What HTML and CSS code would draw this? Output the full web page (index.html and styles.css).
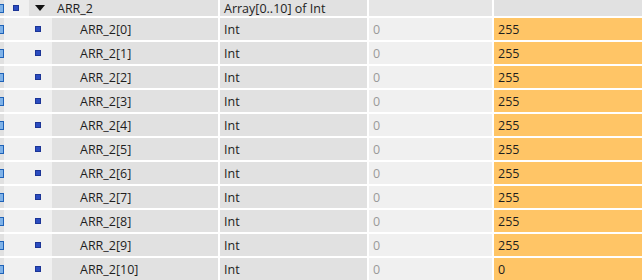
FILE: index.html
```
<!DOCTYPE html>
<html lang="en">
<head>
    <meta charset="UTF-8">
    <title>ARR_2</title>
    <link rel="stylesheet" href="styles.css">
</head>
<body>
<div class="table">
    <div class="row head">
        <div class="name">
            <span class="check"></span>
            <span class="lead"><span class="dot"></span></span>
            <span class="arrow"></span>
            <span class="label">ARR_2</span>
        </div>
        <div class="type">Array[0..10] of Int</div>
        <div class="start"></div>
        <div class="value"></div>
    </div>
    <div class="row">
        <div class="name"><span class="check"></span><span class="lead"><span class="dot"></span></span><span class="label">ARR_2[0]</span></div>
        <div class="type">Int</div><div class="start">0</div><div class="value">255</div>
    </div>
    <div class="row">
        <div class="name"><span class="check"></span><span class="lead"><span class="dot"></span></span><span class="label">ARR_2[1]</span></div>
        <div class="type">Int</div><div class="start">0</div><div class="value">255</div>
    </div>
    <div class="row">
        <div class="name"><span class="check"></span><span class="lead"><span class="dot"></span></span><span class="label">ARR_2[2]</span></div>
        <div class="type">Int</div><div class="start">0</div><div class="value">255</div>
    </div>
    <div class="row">
        <div class="name"><span class="check"></span><span class="lead"><span class="dot"></span></span><span class="label">ARR_2[3]</span></div>
        <div class="type">Int</div><div class="start">0</div><div class="value">255</div>
    </div>
    <div class="row">
        <div class="name"><span class="check"></span><span class="lead"><span class="dot"></span></span><span class="label">ARR_2[4]</span></div>
        <div class="type">Int</div><div class="start">0</div><div class="value">255</div>
    </div>
    <div class="row">
        <div class="name"><span class="check"></span><span class="lead"><span class="dot"></span></span><span class="label">ARR_2[5]</span></div>
        <div class="type">Int</div><div class="start">0</div><div class="value">255</div>
    </div>
    <div class="row">
        <div class="name"><span class="check"></span><span class="lead"><span class="dot"></span></span><span class="label">ARR_2[6]</span></div>
        <div class="type">Int</div><div class="start">0</div><div class="value">255</div>
    </div>
    <div class="row">
        <div class="name"><span class="check"></span><span class="lead"><span class="dot"></span></span><span class="label">ARR_2[7]</span></div>
        <div class="type">Int</div><div class="start">0</div><div class="value">255</div>
    </div>
    <div class="row">
        <div class="name"><span class="check"></span><span class="lead"><span class="dot"></span></span><span class="label">ARR_2[8]</span></div>
        <div class="type">Int</div><div class="start">0</div><div class="value">255</div>
    </div>
    <div class="row">
        <div class="name"><span class="check"></span><span class="lead"><span class="dot"></span></span><span class="label">ARR_2[9]</span></div>
        <div class="type">Int</div><div class="start">0</div><div class="value">255</div>
    </div>
    <div class="row">
        <div class="name"><span class="check"></span><span class="lead"><span class="dot"></span></span><span class="label">ARR_2[10]</span></div>
        <div class="type">Int</div><div class="start">0</div><div class="value">0</div>
    </div>
</div>
</body>
</html>
```

FILE: styles.css
```
* {
    margin: 0;
    padding: 0;
    box-sizing: border-box;
}

body {
    background: #fff;
    font-family: "Open Sans", "Noto Sans", sans-serif;
    font-size: 12.5px;
    color: #1e1e1e;
    overflow: hidden;
}

.table {
    display: flex;
    flex-direction: column;
    gap: 2px;
    width: 642px;
}

.row {
    display: grid;
    grid-template-columns: 218px 147px 123px 148px;
    column-gap: 2px;
    height: 22px;
}

.row.head {
    height: 16px;
}

.row > div {
    display: flex;
    align-items: center;
    background: #e1e1e1;
    white-space: nowrap;
    overflow: hidden;
}

.check {
    flex: none;
    width: 8px;
    height: 9px;
    margin-left: -4px;
    border: 1px solid #1f62b8;
    background: #7fb2e8;
}

.lead {
    flex: none;
    width: 48px;
    align-self: stretch;
    display: flex;
    align-items: center;
    padding-left: 31px;
    background: #f0f0f0;
}

.dot {
    width: 6px;
    height: 6px;
    background: #2b4cc0;
    border: 1px solid #1c3596;
}

.label {
    padding-left: 28px;
}

.head .lead {
    width: 25px;
    padding-left: 9px;
}

.head .arrow {
    flex: none;
    width: 0;
    height: 0;
    margin-left: 6px;
    border-left: 5px solid transparent;
    border-right: 5px solid transparent;
    border-top: 6px solid #111;
}

.head .label {
    padding-left: 12px;
}

.type {
    padding-left: 4px;
}

.start {
    padding-left: 4px;
    color: #9a9a9a;
}

.row > .start {
    background: #f0f0f0;
}

.row.head > .start {
    background: #e6e6e6;
}

.row > .value {
    padding-left: 4px;
    background: #ffc566;
}

.row.head > .value {
    background: #e1e1e1;
}
```
